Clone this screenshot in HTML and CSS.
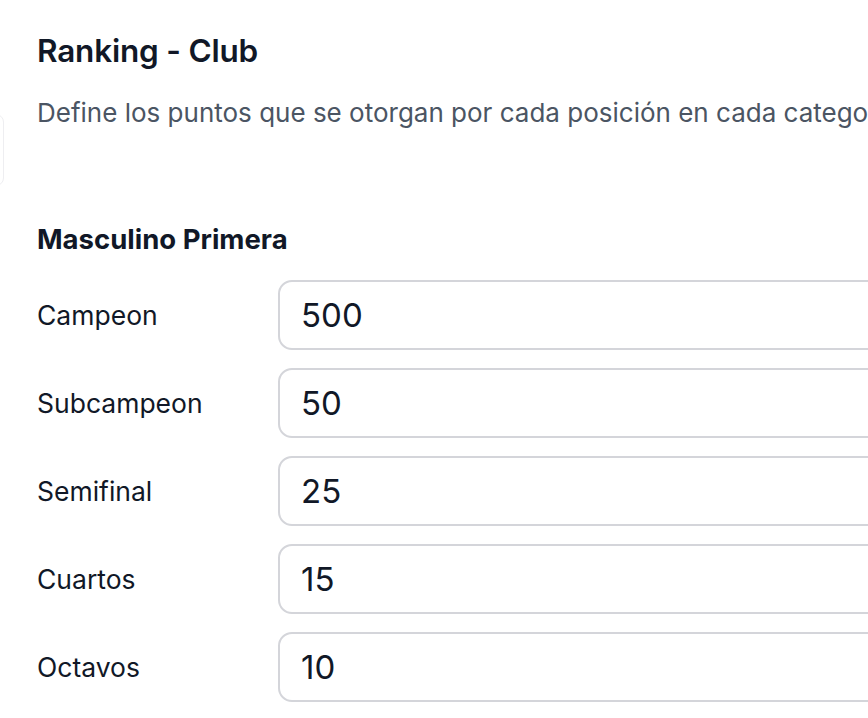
FILE: index.html
```html
<!DOCTYPE html>
<html lang="es">
<head>
<meta charset="utf-8">
<title>Ranking - Club</title>
<link rel="stylesheet" href="styles.css">
</head>
<body>
<div class="layout">
  <div class="side-card"></div>
  <main class="content">
    <header class="page-head">
      <h1 class="title">Ranking - Club</h1>
      <p class="subtitle">Define los puntos que se otorgan por cada posición en cada categoría del ranking del club.</p>
    </header>
    <section class="category">
      <h2 class="cat-title">Masculino Primera</h2>
      <div class="rows">
        <label class="row"><span class="row-label">Campeon</span><input class="row-input" type="text" value="500"></label>
        <label class="row"><span class="row-label">Subcampeon</span><input class="row-input" type="text" value="50"></label>
        <label class="row"><span class="row-label">Semifinal</span><input class="row-input" type="text" value="25"></label>
        <label class="row"><span class="row-label">Cuartos</span><input class="row-input" type="text" value="15"></label>
        <label class="row"><span class="row-label">Octavos</span><input class="row-input" type="text" value="10"></label>
      </div>
    </section>
  </main>
</div>
</body>
</html>
```
FILE: styles.css
```css
* { box-sizing: border-box; }
html, body { margin: 0; padding: 0; background: #ffffff; overflow: hidden; }
body { font-family: Inter, "Noto Sans", sans-serif; color: #111827; }

.layout { display: flex; width: 868px; height: 718px; overflow: hidden; }
.side-card {
  flex: none;
  width: 20px;
  height: 72px;
  margin-top: 114px;
  margin-left: -16px;
  border: 1px solid #eeeef1;
  border-radius: 8px;
}
.content { flex: 1; min-width: 0; padding: 31px 0 0 33px; overflow: hidden; }

.title { margin: 0; font-size: 31.5px; font-weight: 600; line-height: 40px; color: #111827; letter-spacing: -0.2px; }
.subtitle { margin: 25px 0 0; font-size: 26px; line-height: 34px; color: #4b5563; white-space: nowrap; overflow: hidden; }

.category { margin-top: 92px; }
.cat-title { margin: 0; font-size: 27.5px; font-weight: 700; line-height: 34px; color: #111827; }
.rows { display: flex; flex-direction: column; gap: 18px; margin-top: 24px; }
.row { display: flex; align-items: center; }
.row-label { flex: none; width: 241px; font-size: 26.5px; color: #111827; }
.row-input {
  flex: none;
  width: 700px;
  height: 70px;
  border: 2px solid #d4d5da;
  border-radius: 14px;
  padding: 0 21px;
  font-family: Inter, "Noto Sans", sans-serif;
  font-size: 33px;
  color: #111827;
  background: #fff;
  outline: none;
}
```
